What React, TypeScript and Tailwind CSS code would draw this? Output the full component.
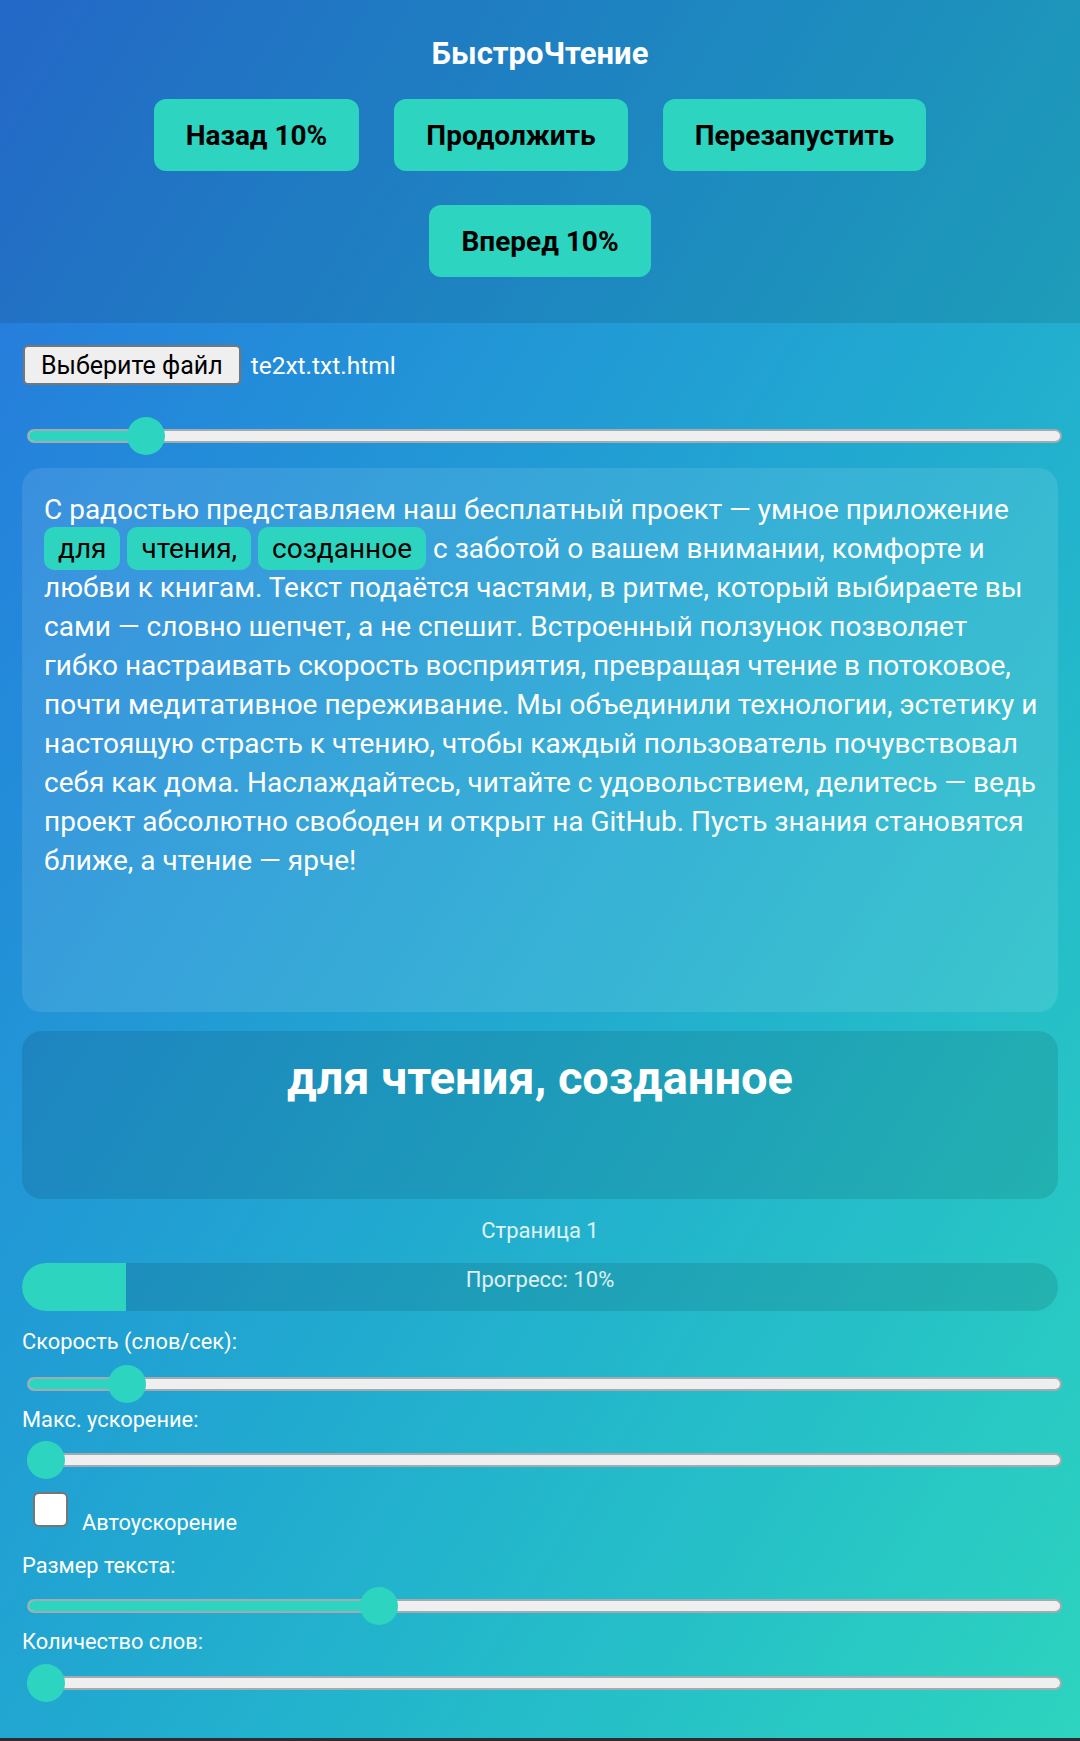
import React from 'react';

function Slider({ value }: { value: number }) {
  const left = value * (1035 - 38);
  return (
    <div className="relative ml-[5px] h-[38px] w-[1035px]">
      <div className="absolute left-0 right-0 top-[12px] h-[14px] overflow-hidden rounded-full border-2 border-[#a2abaf] bg-[#efefef]">
        <div className="h-full bg-[#2dd4bf]" style={{ width: left + 17 }} />
      </div>
      <div
        className="absolute top-0 h-[38px] w-[38px] rounded-full bg-[#2dd4bf]"
        style={{ left }}
      />
    </div>
  );
}

function Btn({ children }: { children: React.ReactNode }) {
  return (
    <div className="flex h-[72px] items-center rounded-[12px] bg-[#2dd4bf] px-[32px] text-[28px] font-bold leading-[33px] text-black">
      {children}
    </div>
  );
}

function Chip({ children }: { children: React.ReactNode }) {
  return (
    <span className="rounded-[10px] bg-[#2dd4bf] px-[14px] py-[5px] text-black">{children}</span>
  );
}

const LINES = [
  'С радостью представляем наш бесплатный проект — умное приложение',
  null,
  'любви к книгам. Текст подаётся частями, в ритме, который выбираете вы',
  'сами — словно шепчет, а не спешит. Встроенный ползунок позволяет',
  'гибко настраивать скорость восприятия, превращая чтение в потоковое,',
  'почти медитативное переживание. Мы объединили технологии, эстетику и',
  'настоящую страсть к чтению, чтобы каждый пользователь почувствовал',
  'себя как дома. Наслаждайтесь, читайте с удовольствием, делитесь — ведь',
  'проект абсолютно свободен и открыт на GitHub. Пусть знания становятся',
  'ближе, а чтение — ярче!',
];

export default function App() {
  return (
    <div className="w-[1080px] font-['Roboto',sans-serif]">
      <div className="bg-gradient-to-br from-[#2874de] to-[#2dd4be]">
        {/* Header */}
        <header className="bg-black/10 pb-[46px] pt-[36px]">
          <h1 className="text-center text-[31px] font-bold leading-[35px] text-white">БыстроЧтение</h1>
          <div className="mt-[28px] flex justify-center gap-[35px]">
            <Btn>Назад 10%</Btn>
            <Btn>Продолжить</Btn>
            <Btn>Перезапустить</Btn>
          </div>
          <div className="mt-[34px] flex justify-center">
            <Btn>Вперед 10%</Btn>
          </div>
        </header>

        {/* Main */}
        <main className="px-[22px] pb-[36px] pt-[22px]">
          <div className="flex h-[40px] items-center">
            <div className="ml-[1px] flex h-[40px] items-center rounded-[5px] border-2 border-[#767676] bg-[#efefef] px-[16px] text-[25px] leading-[29px] text-black">
              Выберите файл
            </div>
            <span className="ml-[10px] text-[24.5px] leading-[29px] text-white">te2xt.txt.html</span>
          </div>

          <div className="mt-[32px]">
            <Slider value={0.1} />
          </div>

          <div className="mt-[13px] h-[544px] rounded-[20px] bg-white/10 p-[22px]">
            <div className="text-[28px] leading-[39px] text-white">
              {LINES.map((l, i) =>
                l === null ? (
                  <div key={i} className="whitespace-nowrap">
                    <Chip>для</Chip> <Chip>чтения,</Chip> <Chip>созданное</Chip> с заботой о вашем
                    внимании, комфорте и
                  </div>
                ) : (
                  <div key={i} className="whitespace-nowrap">
                    {l}
                  </div>
                )
              )}
            </div>
          </div>

          <div className="mt-[19px] h-[168px] rounded-[20px] bg-black/10 pt-[19px]">
            <div className="text-center text-[47px] font-bold leading-[55px] text-white">
              для чтения, созданное
            </div>
          </div>

          <div className="mt-[19px] text-center text-[22px] leading-[25px] text-white/85">Страница 1</div>

          <div className="relative mt-[20px] h-[48px] overflow-hidden rounded-full bg-black/10">
            <div className="absolute bottom-0 left-0 top-0 w-[10%] bg-[#2dd4bf]" />
            <div className="relative pt-[4px] text-center text-[22px] leading-[25px] text-white/85">
              Прогресс: 10%
            </div>
          </div>

          <div className="mt-[18px] text-[21.8px] leading-[25px] text-white">Скорость (слов/сек):</div>
          <div className="mt-[11px]">
            <Slider value={0.0812} />
          </div>

          <div className="mt-[4px] text-[21.8px] leading-[25px] text-white">Макс. ускорение:</div>
          <div className="mt-[9px]">
            <Slider value={0} />
          </div>

          <div className="mt-[13px] flex items-end">
            <div className="mb-[8px] ml-[11px] h-[35px] w-[35px] rounded-[6px] border-2 border-[#767676] bg-white" />
            <span className="ml-[14px] text-[21.8px] leading-[25px] text-white">Автоускорение</span>
          </div>

          <div className="mt-[18px] text-[21.8px] leading-[25px] text-white">Размер текста:</div>
          <div className="mt-[9px]">
            <Slider value={0.334} />
          </div>

          <div className="mt-[4px] text-[21.8px] leading-[25px] text-white">Количество слов:</div>
          <div className="mt-[10px]">
            <Slider value={0} />
          </div>
        </main>
      </div>
      <div className="h-[3px] bg-[#2a2d33]" />
    </div>
  );
}
